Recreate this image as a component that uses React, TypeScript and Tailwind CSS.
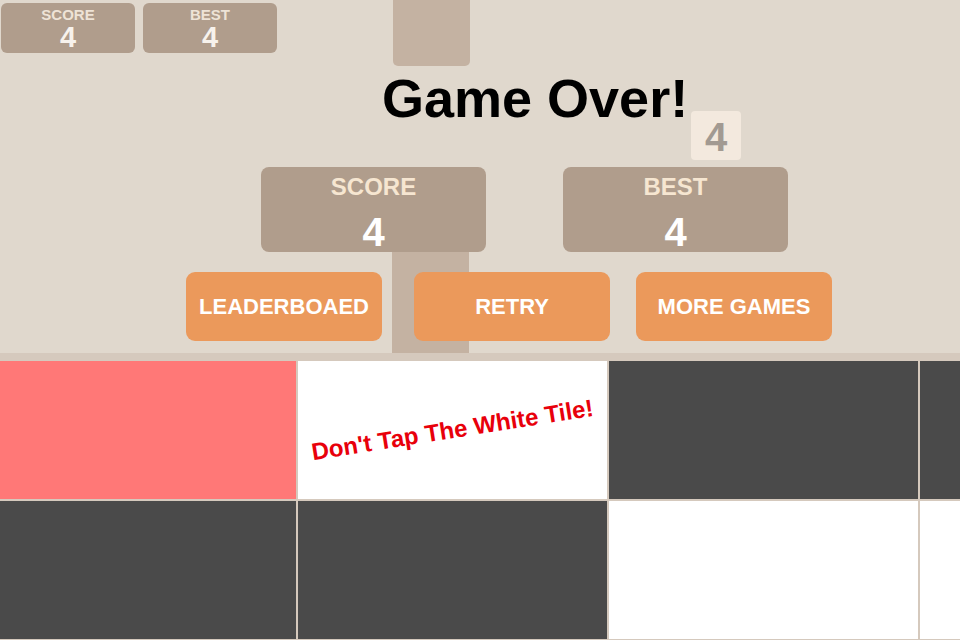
import React from "react";

const font = { fontFamily: '"Liberation Sans", Arial, sans-serif' };

function MiniStat({ label, value }: { label: string; value: number }) {
  return (
    <div className="flex h-[50px] w-[134px] flex-col items-center rounded-[6px] bg-[#b09d8c] pt-[4px]">
      <span className="text-[15px] font-bold leading-none text-[#eee3d6]">{label}</span>
      <span className="mt-px text-[29px] font-bold leading-none text-[#f7f2ec]">{value}</span>
    </div>
  );
}

function BigStat({ label, value }: { label: string; value: number }) {
  return (
    <div className="relative z-10 flex h-[85px] w-[225px] flex-col items-center rounded-[8px] bg-[#b09d8c] pt-[8px]">
      <span className="text-[24px] font-bold leading-none text-[#f6e6d1]">{label}</span>
      <span className="mt-[13px] text-[40px] font-bold leading-none text-white">{value}</span>
    </div>
  );
}

function ActionButton({ children }: { children: React.ReactNode }) {
  return (
    <button className="flex h-[69px] w-[196px] items-center justify-center rounded-[9px] bg-[#eb995b] text-[22px] font-bold text-white">
      {children}
    </button>
  );
}

type Cell = "pink" | "white" | "dark";

const rows: Cell[][] = [
  ["pink", "white", "dark", "dark"],
  ["dark", "dark", "white", "white"],
];

const cellColor: Record<Cell, string> = {
  pink: "bg-[#ff7877]",
  white: "bg-white",
  dark: "bg-[#4a4a4a]",
};

export default function App() {
  return (
    <div
      className="flex h-[640px] w-[960px] flex-col overflow-hidden bg-[#e0d8cd]"
      style={font}
    >
      <div className="relative h-[353px] shrink-0 pt-[3px]">
        {/* falling column tile behind the overlay */}
        <div className="absolute left-[393px] top-0 h-[66px] w-[77px] rounded-b-[5px] bg-[#c4b2a2]" />
        <div className="absolute left-[392px] top-[240px] h-[113px] w-[77px] bg-[#c4b2a2]" />

        <div className="relative ml-px flex gap-[8px]">
          <MiniStat label="SCORE" value={4} />
          <MiniStat label="BEST" value={4} />
        </div>

        <h1 className="relative ml-[382px] mt-[18px] h-[54px] whitespace-nowrap text-[54px] font-bold leading-none text-black">
          Game Over!
        </h1>

        <div className="absolute left-[691px] top-[111px] flex h-[49px] w-[50px] items-center justify-center rounded-[4px] bg-[#f3e9de] pt-[2px] text-[40px] font-bold leading-none text-[#a29a92]">
          4
        </div>

        <div className="relative ml-[261px] mt-[42px] flex gap-[77px]">
          <BigStat label="SCORE" value={4} />
          <BigStat label="BEST" value={4} />
        </div>

        <div className="relative ml-[186px] mt-[20px] flex">
          <ActionButton>LEADERBOAED</ActionButton>
          <div className="ml-[32px]">
            <ActionButton>RETRY</ActionButton>
          </div>
          <div className="ml-[26px]">
            <ActionButton>MORE GAMES</ActionButton>
          </div>
        </div>
      </div>

      <div className="flex flex-1 flex-col gap-[2px] bg-[#d5c9bd] pt-[8px]">
        {rows.map((row, r) => (
          <div key={r} className="-ml-[13px] flex gap-[2px]">
            {row.map((c, i) => (
              <div
                key={i}
                className={`flex h-[138px] w-[309px] shrink-0 items-center justify-center ${cellColor[c]}`}
              >
                {r === 0 && i === 1 && (
                  <span className="-rotate-[9deg] whitespace-nowrap text-[24px] font-bold text-[#e8000b]">
                    Don't Tap The White Tile!
                  </span>
                )}
              </div>
            ))}
          </div>
        ))}
        <div className="h-px bg-[#222]" />
      </div>
    </div>
  );
}
